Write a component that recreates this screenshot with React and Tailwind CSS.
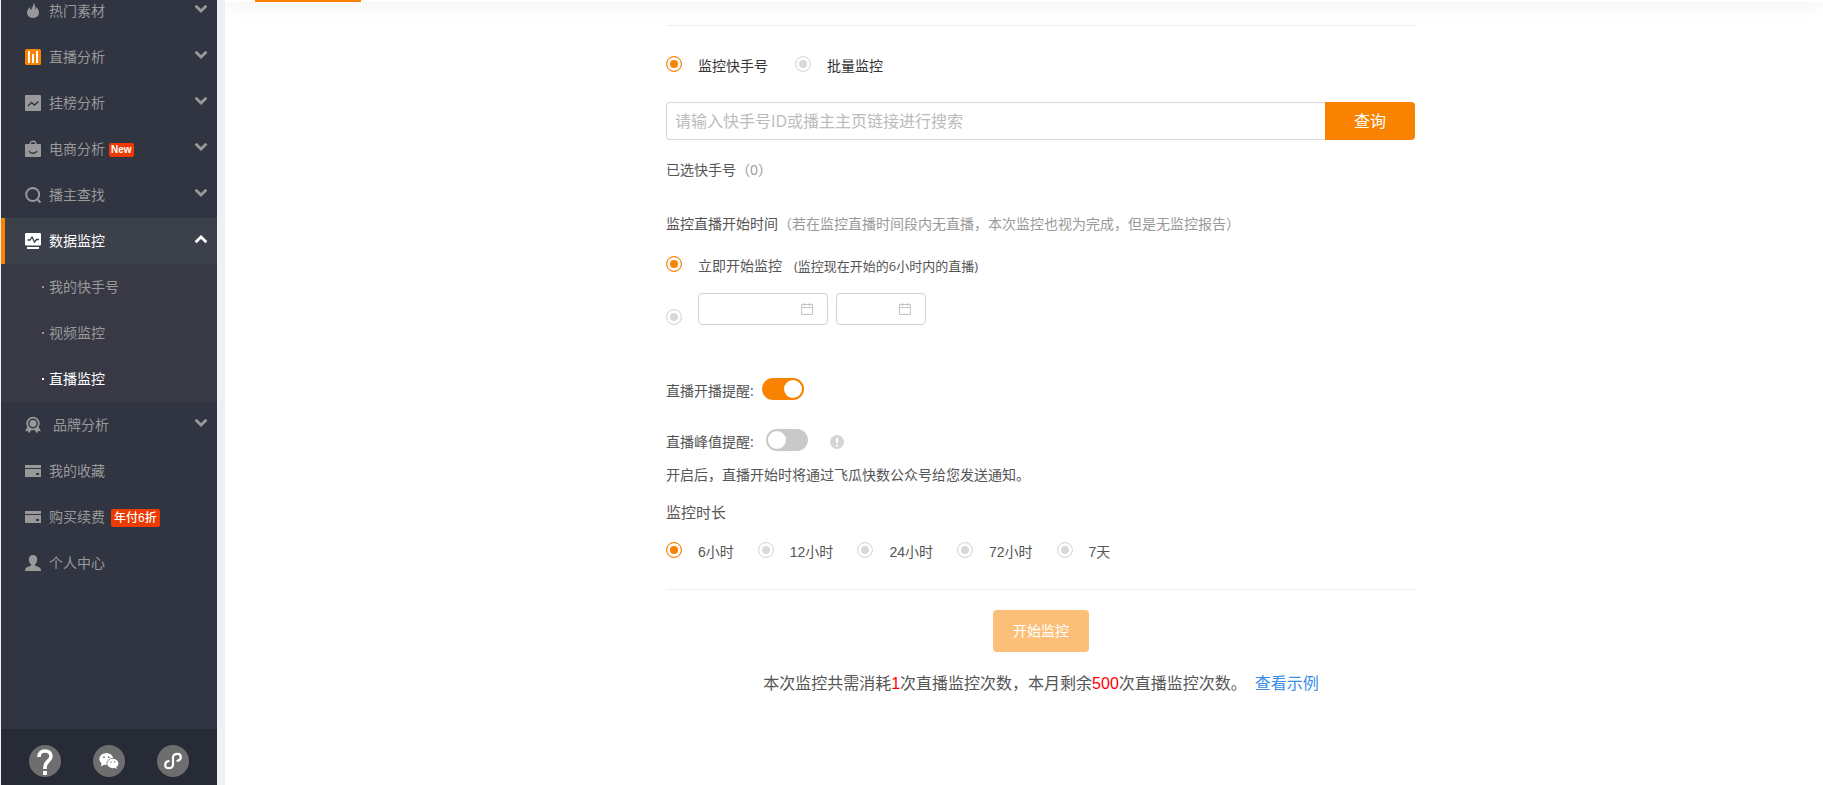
import { useState } from "react";
import clsx from "clsx";

const icons = {
  fire: (
    <path d="M8.300 0c.7 3.200-1.800 4.400-1.900 7.200C5.400 6.400 5 5.200 5.200 4 3.200 5.600 2 7.600 2 9.800 2 12.900 4.500 15 8 15s6-2.100 6-5.200c0-2.200-1-4.200-2.700-5.800 0 1-.2 2-.9 2.700C10.700 4 10 1.300 8.300 0z" />
  ),
  bars: (
    <>
      <rect width="16" height="16" rx="1.500" fill="#f98200" />
      <path fill="#fff" d="M3 2h2v12H3zM7 5h2v9H7zM11 2h2v12h-2z" />
    </>
  ),
  trend: (
    <>
      <rect width="16" height="16" rx="1" />
      <path d="M3 11 6.500 7.500l3 2.500L13.500 6.500" fill="none" stroke="#303541" strokeWidth="1.400" />
    </>
  ),
  bag: (
    <>
      <path d="M5 3.500C5 1.500 6 .2 8 .2s3 1.300 3 3.300" fill="none" stroke="currentColor" strokeWidth="1.400" />
      <rect y="3" width="16" height="13" rx="1" />
      <path d="M4 10c1.500 3 6.500 3 8 0" fill="none" stroke="#303541" strokeWidth="1.400" />
    </>
  ),
  search: (
    <path
      d="M12.500 12.500 15.500 15.500M14.200 7.500a6.500 6.500 0 1 1-13 0 6.500 6.500 0 0 1 13 0z"
      fill="none"
      stroke="currentColor"
      strokeWidth="2"
    />
  ),
  monitor: (
    <>
      <rect width="16" height="12.500" rx="1" />
      <rect x="2" y="14" width="12" height="2" />
      <path d="M2.500 7h2.500L7 4l2.500 5L11.500 6.500h2.500" fill="none" stroke="#3c404b" strokeWidth="1.300" />
    </>
  ),
  medal: (
    <>
      <circle cx="8" cy="6.500" r="5.800" fill="none" stroke="currentColor" strokeWidth="1.800" />
      <circle cx="8" cy="6.500" r="3.500" />
      <path d="M2.300 10 0 14.300l2.700-.2L4.200 16.200 6.600 12.800zM13.700 10l2.300 4.300-2.700-.2-1.500 2.100-2.400-3.400z" />
    </>
  ),
  card: (
    <path fillRule="evenodd" d="M0 2h16v3H0zM0 6h16v8H0zM11 10v2h3v-2z" />
  ),
  user: (
    <path d="M8 0c2.600 0 4.200 1.800 4.200 4.400 0 2-.9 3.900-2.200 4.900v1.200l4.500 2c1 .5 1.500 1.500 1.500 3.500H0c0-2 .5-3 1.500-3.500l4.500-2V9.300C4.700 8.300 3.800 6.400 3.800 4.400 3.800 1.800 5.400 0 8 0z" />
  ),
};

const menu = [
  { label: "热门素材", icon: "fire", arrow: true },
  { label: "直播分析", icon: "bars", arrow: true },
  { label: "挂榜分析", icon: "trend", arrow: true },
  { label: "电商分析", icon: "bag", arrow: true, isNew: true },
  { label: "播主查找", icon: "search", arrow: true },
  {
    label: "数据监控",
    icon: "monitor",
    arrow: true,
    active: true,
    children: ["我的快手号", "视频监控", "直播监控"],
  },
  { label: "品牌分析", icon: "medal", arrow: true, wide: true },
  { label: "我的收藏", icon: "card" },
  { label: "购买续费", icon: "card", discount: "年付6折" },
  { label: "个人中心", icon: "user" },
];

const MenuIcon = ({ name }) => (
  <svg className="h-4 w-4 shrink-0 overflow-visible" viewBox="0 0 16 16" fill="currentColor" aria-hidden="true">
    {icons[name]}
  </svg>
);

const Chevron = ({ up }) => (
  <svg
    className={clsx("mb-1 ml-auto h-2 w-3 overflow-visible", up && "rotate-180")}
    viewBox="0 0 12 8"
    fill="none"
    stroke="currentColor"
    strokeWidth="2.800"
    aria-hidden="true"
  >
    <path d="M.6.800 6 6l5.400-5.200" />
  </svg>
);

const MenuItem = ({ item }) => (
  <li>
    <a
      href="#"
      className={clsx(
        "flex h-[46px] items-center border-l-4 pr-2.5 pl-5",
        item.active ? "border-[#f98200] bg-[#3c404b] text-white" : "border-transparent"
      )}
    >
      <MenuIcon name={item.icon} />
      <span className={item.wide ? "ml-3" : "ml-2"}>{item.label}</span>
      {item.isNew && (
        <span className="mt-0.5 ml-1 rounded-xs bg-[#ed3a00] px-0.5 font-['Liberation_Sans'] text-[10px] leading-[14px] font-bold text-white">
          New
        </span>
      )}
      {item.discount && (
        <span className="mt-0.5 ml-1.5 rounded-xs bg-[#ed3a00] px-[3px] font-['Liberation_Sans','Noto_Sans_CJK_SC',sans-serif] text-xs leading-[18px] font-medium text-white">
          {item.discount}
        </span>
      )}
      {item.arrow && <Chevron up={item.active} />}
    </a>
    {item.children && (
      <ul className="bg-[#383945]">
        {item.children.map((child) => (
          <li key={child}>
            <a
              href="#"
              className={clsx("flex h-[46px] items-center gap-[5px] pl-[41px]", child === "直播监控" && "text-white")}
            >
              <span className="h-0.5 w-0.5 bg-current" />
              {child}
            </a>
          </li>
        ))}
      </ul>
    )}
  </li>
);

const RoundLink = ({ label, children }) => (
  <a href="#" aria-label={label} className="flex h-8 w-8 items-center justify-center rounded-full bg-[#6e6e6e] text-white">
    {children}
  </a>
);

const Sidebar = () => (
  <aside className="flex w-[216px] shrink-0 flex-col overflow-hidden bg-[#303541] text-sm text-[#999]">
    <nav className="-mt-3 flex-1">
      <ul>
        {menu.map((item) => (
          <MenuItem key={item.label} item={item} />
        ))}
      </ul>
    </nav>
    <div className="flex h-14 shrink-0 justify-between bg-[#272b36] px-7 pt-4">
      <RoundLink label="帮助">
        <svg className="mt-0.5 h-[26px] w-4" viewBox="0 0 16 26" fill="none" aria-hidden="true">
          <path d="M2 8C2 4 4.500 2 8 2s6 2 6 5.300c0 4.700-6 5.200-6 10.700v2" stroke="#fff" strokeWidth="3.600" />
          <path d="M6 22h4v4H6z" fill="#fff" />
        </svg>
      </RoundLink>
      <RoundLink label="微信">
        <svg className="h-4 w-5" viewBox="0 0 20 16" aria-hidden="true">
          <ellipse cx="7.300" cy="6" rx="7" ry="6" fill="#fff" />
          <path d="M2.500 10 2 13.500l3.500-2z" fill="#fff" />
          <ellipse cx="13.800" cy="10.500" rx="6.300" ry="5.400" fill="#6e6e6e" />
          <ellipse cx="13.800" cy="10.500" rx="5.600" ry="4.700" fill="#fff" />
          <path d="M15 14.500l2.700 1.500-.4-2.500z" fill="#fff" />
          <g fill="#6e6e6e">
            <circle cx="5" cy="4.200" r=".9" />
            <circle cx="9.700" cy="4.200" r=".9" />
            <circle cx="12" cy="9" r=".7" />
            <circle cx="15.700" cy="9" r=".7" />
          </g>
        </svg>
      </RoundLink>
      <RoundLink label="小程序">
        <svg className="h-[18px] w-[18px]" viewBox="0 0 18 18" fill="none" stroke="#fff" strokeWidth="2.200" strokeLinecap="round" aria-hidden="true">
          <path d="M13.500 8.800c2-.3 3.300-1.800 3.300-3.700 0-1.900-1.500-3.300-3.600-3.300C10.800 1.800 9 3.300 9 5.300v7.400c0 2-1.800 3.500-4 3.500s-3.800-1.400-3.800-3.300c0-1.900 1.300-3.400 3.300-3.700" />
        </svg>
      </RoundLink>
    </div>
  </aside>
);

const Radio = ({ name, label, className, ...rest }) => (
  <label className={clsx("flex items-start gap-4 leading-5", className)}>
    <input
      type="radio"
      name={name}
      className="h-4 w-4 shrink-0 appearance-none rounded-full border border-[#d9d9d9] bg-[#d9d9d9] shadow-[inset_0_0_0_3px_#fff] checked:border-[#f98200] checked:bg-[#f98200]"
      {...rest}
    />
    {label}
  </label>
);

const Switch = (props) => (
  <input
    type="checkbox"
    role="switch"
    className="h-[22px] w-[42px] appearance-none rounded-full bg-[#c9c9c9] p-0.5 before:block before:h-[18px] before:w-[18px] before:rounded-full before:bg-white checked:bg-[#f98200] checked:before:translate-x-5"
    {...props}
  />
);

const CalendarInput = ({ label, className }) => (
  <div className={clsx("flex h-8 items-center rounded-sm border border-[#d0d0d0] pr-3.5", className)}>
    <input type="text" aria-label={label} className="min-w-0 flex-1 pl-2 outline-none" />
    <svg className="h-3 w-3" viewBox="0 0 12 12" fill="none" stroke="#c4c4c4" aria-hidden="true">
      <path d="M.5 1.500h11v10H.5zM.5 4.500h11M3.500 0v3M8.500 0v3" />
    </svg>
  </div>
);

const durations = ["6小时", "12小时", "24小时", "72小时", "7天"];

const MonitorForm = () => {
  const [mode, setMode] = useState("single");
  const [start, setStart] = useState("now");
  const [duration, setDuration] = useState("6小时");

  return (
    <form className="w-full max-w-[750px] text-sm text-[#555]" onSubmit={(e) => e.preventDefault()}>
      <hr className="border-[#eee]" />

      <div className="mt-[30px] flex gap-[27px] text-[#333]">
        <Radio name="mode" label="监控快手号" checked={mode === "single"} onChange={() => setMode("single")} />
        <Radio name="mode" label="批量监控" checked={mode === "batch"} onChange={() => setMode("batch")} />
      </div>

      <div className="mt-[26px] mr-px flex h-[38px] text-base">
        <input
          type="text"
          aria-label="快手号"
          placeholder="请输入快手号ID或播主主页链接进行搜索"
          className="min-w-0 flex-1 rounded-l-sm border border-r-0 border-[#d9d9d9] px-2 outline-none placeholder:text-[#bbb]"
        />
        <button type="submit" className="w-[90px] rounded-r-sm bg-[#f98200] text-white">
          查询
        </button>
      </div>

      <p className="mt-5 leading-5">
        已选快手号<span className="text-[#999]">（0）</span>
      </p>

      <p className="mt-[34px] leading-5">
        监控直播开始时间
        <span className="text-[#999]">（若在监控直播时间段内无直播，本次监控也视为完成，但是无监控报告）</span>
      </p>
      <Radio
        name="start"
        className="mt-[22px]"
        label={
          <span>
            立即开始监控<span className="ml-3 text-[13px]">(监控现在开始的6小时内的直播)</span>
          </span>
        }
        checked={start === "now"}
        onChange={() => setStart("now")}
      />
      <div className="mt-[17px] flex items-end gap-4">
        <Radio name="start" aria-label="指定开始时间" checked={start === "later"} onChange={() => setStart("later")} />
        <div className="flex gap-2">
          <CalendarInput label="开始日期" className="w-[130px]" />
          <CalendarInput label="开始时间" className="w-[90px]" />
        </div>
      </div>

      <div className="mt-[53px] flex items-start gap-2">
        <label htmlFor="live-notice" className="pt-0.5 leading-[22px]">
          直播开播提醒:
        </label>
        <Switch id="live-notice" defaultChecked />
      </div>
      <div className="mt-[27px] flex items-start gap-3">
        <label htmlFor="peak-notice" className="pt-0.5 leading-[22px]">
          直播峰值提醒:
        </label>
        <Switch id="peak-notice" />
        <svg className="mt-1.5 ml-2.5 h-3.5 w-3.5" viewBox="0 0 14 14" aria-hidden="true">
          <circle cx="7" cy="7" r="7" fill="#d5d5d5" />
          <path d="M6 3h2v5H6zM6 9.500h2v2H6z" fill="#fff" />
        </svg>
      </div>
      <p className="mt-3 leading-5">开启后，直播开始时将通过飞瓜快数公众号给您发送通知。</p>

      <p className="mt-[17px] text-[15px] leading-5">监控时长</p>
      <div className="mt-5 flex gap-6 font-['Liberation_Sans','Noto_Sans_CJK_SC',sans-serif]">
        {durations.map((item) => (
          <Radio
            key={item}
            name="duration"
            label={item}
            checked={duration === item}
            onChange={() => setDuration(item)}
          />
        ))}
      </div>

      <hr className="mt-[27px] border-[#eee]" />

      <div className="mt-5 text-center">
        <button type="submit" disabled className="h-[42px] w-24 rounded-sm bg-[#fcbf7a] text-white">
          开始监控
        </button>
        <p className="mt-5 font-['Liberation_Sans','Noto_Sans_CJK_SC',sans-serif] text-base leading-6">
          本次监控共需消耗<span className="text-[#f00]">1</span>次直播监控次数，本月剩余
          <span className="text-[#f00]">500</span>次直播监控次数。
          <a href="#" className="ml-2 text-[#3a8ee6]">
            查看示例
          </a>
        </p>
      </div>
    </form>
  );
};

const App = () => {
  return (
    <div className="flex min-h-screen bg-[#eff0f6] pl-px font-['Open_Sans','Noto_Sans_CJK_SC',sans-serif]">
      <Sidebar />
      <main className="ml-2 flex-1 overflow-hidden bg-white">
        {/* tab bar, scrolled out except for its bottom edge */}
        <div className="-mt-[62px] flex h-16 items-end pl-[30px] shadow-[0_2px_20px_rgba(0,0,0,0.06)]">
          <div className="h-0.5 w-[106px] bg-[#f98200]" />
        </div>
        <div className="flex justify-center pt-[23px] pl-[34px]">
          <MonitorForm />
        </div>
      </main>
    </div>
  );
};

export default App;
